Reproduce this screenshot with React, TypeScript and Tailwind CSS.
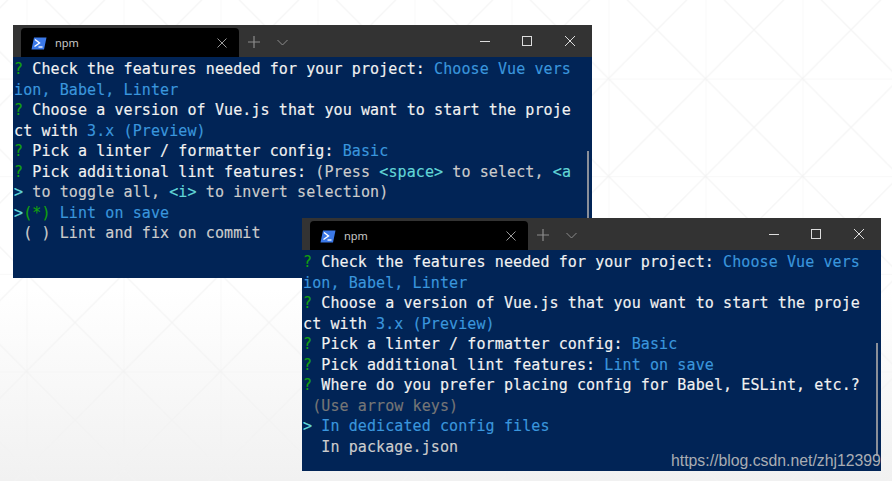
import type { ReactNode } from 'react';

const W = ({ children }: { children: ReactNode }) => <span className="text-[#f2f2f2]">{children}</span>;
const B = ({ children }: { children: ReactNode }) => <span className="text-[#3a96dd]">{children}</span>;
const G = ({ children }: { children: ReactNode }) => <span className="text-[#13a10e]">{children}</span>;
const T = ({ children }: { children: ReactNode }) => <span className="text-[#61d6d6]">{children}</span>;

const commonTop = [
  <><G>?</G><W> Check the features needed for your project: </W><B>Choose Vue vers</B></>,
  <B>ion, Babel, Linter</B>,
  <><G>?</G><W> Choose a version of Vue.js that you want to start the proje</W></>,
  <><W>ct with </W><B>3.x (Preview)</B></>,
  <><G>?</G><W> Pick a linter / formatter config: </W><B>Basic</B></>,
];

const firstLines = [
  ...commonTop,
  <><G>?</G><W> Pick additional lint features: </W><span className="text-[#cccccc]">(Press </span><T>&lt;space&gt;</T><span className="text-[#cccccc]"> to select, </span><T>&lt;a</T></>,
  <><T>&gt;</T><span className="text-[#cccccc]"> to toggle all, </span><T>&lt;i&gt;</T><span className="text-[#cccccc]"> to invert selection)</span></>,
  <><T>&gt;</T><G>(*)</G><B> Lint on save</B></>,
  <span className="text-[#cccccc]"> ( ) Lint and fix on commit</span>,
];

const secondLines = [
  ...commonTop,
  <><G>?</G><W> Pick additional lint features: </W><B>Lint on save</B></>,
  <><G>?</G><W> Where do you prefer placing config for Babel, ESLint, etc.?</W></>,
  <span className="text-[#767676]"> (Use arrow keys)</span>,
  <><T>&gt;</T><B> In dedicated config files</B></>,
  <span className="text-[#cccccc]">  In package.json</span>,
];

function PsIcon() {
  return (
    <svg width="16" height="13" viewBox="0 0 16 13">
      <path d="M3 0.5H15.5L13 12.5H0.5Z" fill="#3b78e7" />
      <path d="M4 2.5L8.5 6L3.5 9.5" fill="none" stroke="#fff" strokeWidth="1.4" />
      <path d="M7.5 10H11.5" stroke="#fff" strokeWidth="1.3" />
    </svg>
  );
}

function TerminalWindow({ lines, pos, scroll }: { lines: ReactNode[]; pos: string; scroll: string }) {
  return (
    <div className={`absolute flex w-[579px] flex-col ${pos}`}>
      <div className="flex h-[32px] items-end bg-[#333333] pl-[8px]">
        <div className="flex h-[29px] w-[218px] items-center rounded-t-[4px] bg-black pl-[10px] pr-[12px] pt-[1px]">
          <PsIcon />
          <span className="ml-[8px] font-['Noto_Sans',sans-serif] text-[11px] text-[#c8c8c8]">npm</span>
          <svg className="ml-auto" width="10" height="10" viewBox="0 0 10 10" stroke="#9a9a9a" strokeWidth="1">
            <path d="M0.5 0.5L9.5 9.5M9.5 0.5L0.5 9.5" />
          </svg>
        </div>
        <div className="flex h-[29px] items-center self-end pb-[1px]">
          <svg className="ml-[9px]" width="12" height="12" viewBox="0 0 12 12" stroke="#8c8c8c" strokeWidth="1.2">
            <path d="M6 0V12M0 6H12" />
          </svg>
          <svg className="ml-[17px]" width="11" height="7" viewBox="0 0 11 7" fill="none" stroke="#8c8c8c" strokeWidth="1">
            <path d="M0.5 1L5.5 6L10.5 1" />
          </svg>
        </div>
        <div className="ml-auto flex h-[32px] items-center pr-[17px] text-[#dddddd]">
          <svg width="10" height="10" viewBox="0 0 10 10" stroke="currentColor" strokeWidth="1"><path d="M0 5.5H10" /></svg>
          <svg className="ml-[32px]" width="10" height="10" viewBox="0 0 10 10" fill="none" stroke="currentColor" strokeWidth="1"><rect x="0.5" y="0.5" width="9" height="9" /></svg>
          <svg className="ml-[33px]" width="10" height="10" viewBox="0 0 10 10" stroke="currentColor" strokeWidth="1"><path d="M0 0L10 10M10 0L0 10" /></svg>
        </div>
      </div>
      <div className="relative h-[221px] bg-[#012456] pl-[1px] pt-[2px] font-['DejaVu_Sans_Mono',monospace] text-[15px] leading-[20.55px] tracking-[0.1px] whitespace-pre [-webkit-text-stroke:0.15px]">
        {lines.map((line, i) => <div key={i}>{line}</div>)}
        <div className={`absolute right-[3px] w-[2px] bg-[#8a8f99] ${scroll}`} />
      </div>
    </div>
  );
}

export default function App() {
  return (
    <div className="relative h-[481px] w-[892px] overflow-hidden bg-gradient-to-b from-white via-white via-60% to-[#f1f1f1]">
      <svg className="absolute inset-0" width="892" height="481">
        <defs>
          <pattern id="grid" x="26.5" y="-19" width="97" height="97.6" patternUnits="userSpaceOnUse">
            <path d="M0 0V97.6M0 0H97M0 0L97 97.6M97 0L0 97.6" fill="none" stroke="#f2f2f2" strokeWidth="1" />
          </pattern>
        </defs>
        <rect width="892" height="481" fill="url(#grid)" />
      </svg>
      <TerminalWindow lines={firstLines} pos="left-[13px] top-[25px]" scroll="top-[94px] h-[80px]" />
      <TerminalWindow lines={secondLines} pos="left-[302px] top-[218px]" scroll="top-[93px] h-[113px]" />
      <span className="absolute left-[671px] top-[451px] font-['Liberation_Sans',sans-serif] text-[15.8px] leading-[20px] text-[#a9adb3]">https://blog.csdn.net/zhj12399</span>
    </div>
  );
}
